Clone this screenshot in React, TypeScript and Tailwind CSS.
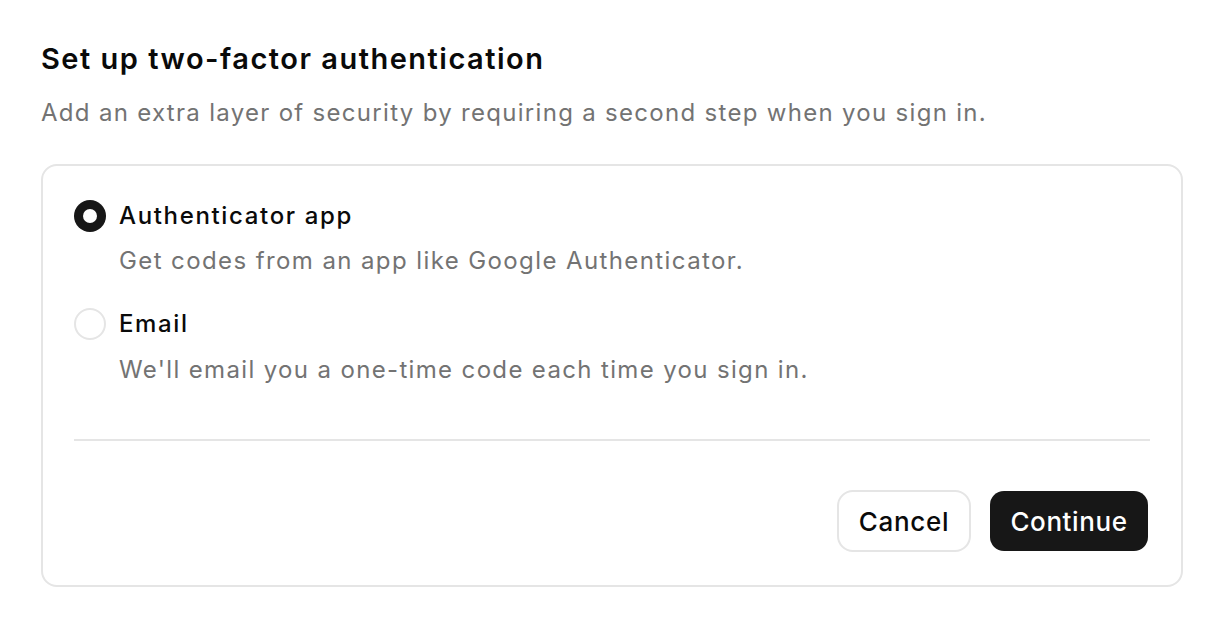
import React from "react";

function Radio({ checked }: { checked: boolean }) {
  return checked ? (
    <span className="flex h-[32px] w-[32px] shrink-0 items-center justify-center rounded-full bg-[#171717]">
      <span className="h-[14px] w-[14px] rounded-full bg-white" />
    </span>
  ) : (
    <span className="h-[32px] w-[32px] shrink-0 rounded-full border-2 border-[#e5e5e5] bg-white" />
  );
}

export default function App() {
  return (
    <div
      className="min-h-[624px] w-[1224px] bg-white px-[41px] pt-[40px] text-[#0a0a0a]"
      style={{ fontFamily: "Inter, 'Noto Sans', sans-serif" }}
    >
      <h1 className="text-[29px] font-semibold leading-[38px] tracking-[1.5px]">
        Set up two-factor authentication
      </h1>
      <p className="mt-[19px] text-[24px] leading-[32px] tracking-[1.3px] text-[#737373]">
        Add an extra layer of security by requiring a second step when you sign in.
      </p>
      <div className="mt-[35px] rounded-[16px] border-2 border-[#e5e5e5] px-[31px] pb-[33px] pt-[34px]">
        <div className="flex flex-col gap-[31px]">
          <div className="flex gap-[13px]">
            <Radio checked />
            <div className="flex flex-col">
              <span className="text-[24px] font-medium leading-[32px] tracking-[1.65px]">Authenticator app</span>
              <span className="mt-[13px] text-[24px] leading-[32px] tracking-[1.4px] text-[#737373]">
                Get codes from an app like Google Authenticator.
              </span>
            </div>
          </div>
          <div className="flex gap-[13px]">
            <Radio checked={false} />
            <div className="flex flex-col">
              <span className="text-[24px] font-medium leading-[32px] tracking-[1.65px]">Email</span>
              <span className="mt-[14px] text-[24px] leading-[32px] tracking-[1.35px] text-[#737373]">
                We'll email you a one-time code each time you sign in.
              </span>
            </div>
          </div>
        </div>
        <div className="mt-[53px] h-[2px] w-full bg-[#e5e5e5]" />
        <div className="mr-[2px] mt-[49px] flex justify-end gap-[19px]">
          <button className="h-[62px] w-[134px] rounded-[16px] border-2 border-[#e5e5e5] bg-white text-[26px] font-medium tracking-[0.7px] text-[#0a0a0a]">
            Cancel
          </button>
          <button className="h-[60px] w-[158px] self-center rounded-[14px] bg-[#171717] text-[26px] font-medium tracking-[0.6px] text-white">
            Continue
          </button>
        </div>
      </div>
    </div>
  );
}
